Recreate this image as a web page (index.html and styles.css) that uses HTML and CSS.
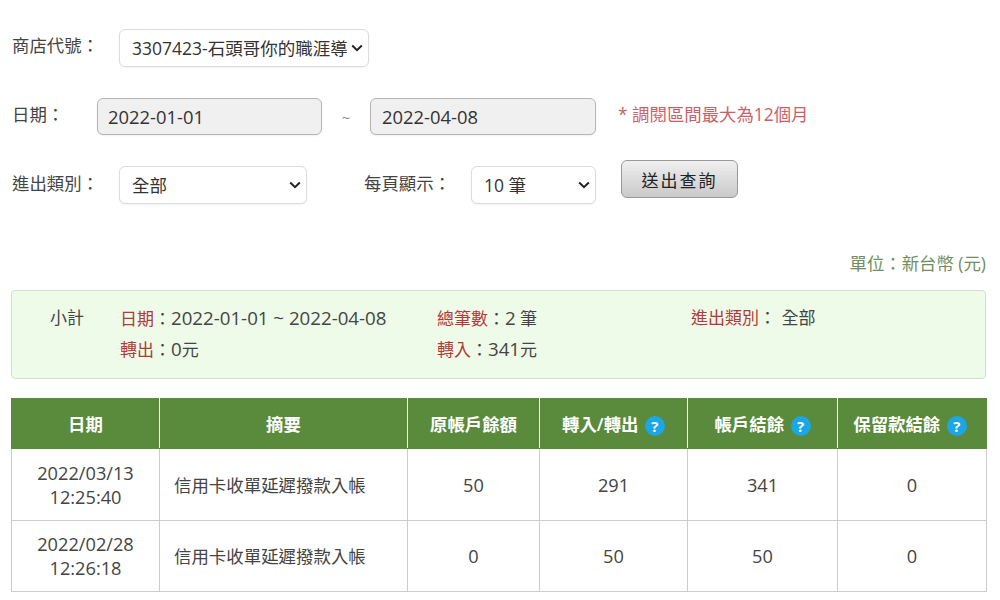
FILE: index.html
```html
<!DOCTYPE html>
<html lang="zh-Hant">
<head>
<meta charset="utf-8">
<title>查詢</title>
<link rel="stylesheet" href="styles.css">
</head>
<body>
<main class="page">
  <form class="query">
    <div class="row row-shop">
      <label class="label label-wide">商店代號：</label>
      <select class="field select-shop"><option>3307423-石頭哥你的職涯導師</option></select>
    </div>
    <div class="row row-date">
      <label class="label label-date">日期：</label>
      <input class="field date" type="text" value="2022-01-01" readonly>
      <span class="tilde">~</span>
      <input class="field date" type="text" value="2022-04-08" readonly>
      <span class="hint">* 調閱區間最大為12個月</span>
    </div>
    <div class="row row-type">
      <label class="label label-wide">進出類別：</label>
      <select class="field select-type"><option>全部</option></select>
      <label class="label label-page">每頁顯示：</label>
      <select class="field select-page"><option>10 筆</option></select>
      <button class="submit" type="button">送出查詢</button>
    </div>
  </form>

  <p class="unit">單位：新台幣 (元)</p>

  <section class="summary">
    <div class="summary-title">小計</div>
    <div class="summary-grid">
      <div><span class="key">日期</span>：<span class="val">2022-01-01 ~ 2022-04-08</span></div>
      <div><span class="key">總筆數</span>：<span class="val">2</span> 筆</div>
      <div><span class="key">進出類別</span>：&nbsp;<span class="all">全部</span></div>
      <div><span class="key">轉出</span>：<span class="val">0</span>元</div>
      <div><span class="key">轉入</span>：<span class="val">341</span>元</div>
    </div>
  </section>

  <table class="records">
    <colgroup>
      <col class="c1"><col class="c2"><col class="c3"><col class="c4"><col class="c5"><col class="c6">
    </colgroup>
    <thead>
      <tr>
        <th>日期</th>
        <th>摘要</th>
        <th>原帳戶餘額</th>
        <th>轉入/轉出 <span class="help">?</span></th>
        <th>帳戶結餘 <span class="help">?</span></th>
        <th class="last">保留款結餘 <span class="help">?</span></th>
      </tr>
    </thead>
    <tbody>
      <tr class="first">
        <td>2022/03/13<br>12:25:40</td>
        <td class="desc">信用卡收單延遲撥款入帳</td>
        <td>50</td><td>291</td><td>341</td><td>0</td>
      </tr>
      <tr>
        <td>2022/02/28<br>12:26:18</td>
        <td class="desc">信用卡收單延遲撥款入帳</td>
        <td>0</td><td>50</td><td>50</td><td>0</td>
      </tr>
    </tbody>
  </table>
</main>
</body>
</html>
```
FILE: styles.css
```css
* { box-sizing: border-box; }
html, body { margin: 0; padding: 0; background: #fff; }
body {
  font-family: "Open Sans", "Noto Sans CJK TC", sans-serif;
  font-size: 17.5px;
  color: #444;
  overflow: hidden;
  height: 600px;
}
.page { padding: 29px 14px 0 11px; width: 1000px; }
.row { display: flex; align-items: flex-start; }
.row-shop { height: 69px; }
.row-date { height: 68px; }
.row-type { height: 69px; }
.label { display: block; padding-left: 1px; line-height: 33px; font-size: 17.4px; color: #444; flex: none; }
.row-type .label { line-height: 35px; }
.label-wide { width: 108px; }
.label-date { width: 86px; }
.label-page { width: 107px; margin-left: 57px; padding-left: 0; }
.field {
  font-family: inherit;
  font-size: 17.5px;
  color: #333;
  height: 37px;
  border: 1px solid #dcdcdc;
  border-radius: 6px;
  background-color: #fff;
  box-shadow: 0 1px 2px rgba(0,0,0,.06);
  flex: none;
}
select.field {
  appearance: none;
  padding: 0 21px 0 12px;
  height: 38px;
  background-image: url("data:image/svg+xml,%3Csvg xmlns='http://www.w3.org/2000/svg' width='12' height='8' viewBox='0 0 12 8'%3E%3Cpath d='M1.2 1.5 6 6.2l4.8-4.7' fill='none' stroke='%23222' stroke-width='2'/%3E%3C/svg%3E");
  background-repeat: no-repeat;
  background-position: right 5px center;
}
.select-shop { width: 250px; }
.select-type { width: 188px; background-position: right 5px center; }
.select-page { width: 125px; }
.date {
  width: 225px;
  padding: 0 10px;
  background: #f0f0f0;
  border-color: #b5b5b5;
  font-size: 18.4px;
  outline: none;
}
.tilde + .date { width: 226px; padding-left: 11px; }
.tilde { width: 48px; text-align: center; line-height: 38px; color: #888; font-size: 15px; flex: none; }
.hint { margin-left: 22px; color: #c9616a; line-height: 32px; font-size: 17.4px; }
.submit {
  width: 117px;
  height: 38px;
  margin: -6px 0 0 25px;
  border: 1px solid #999;
  border-radius: 6px;
  background: linear-gradient(#f0f0f0, #c9c9c9);
  font-family: inherit;
  font-size: 17px;
  letter-spacing: 2px;
  color: #222;
}
.unit {
  margin: 0;
  height: 55px;
  padding-top: 15px;
  line-height: 27px;
  text-align: right;
  color: #6f8f5d;
  font-size: 17.4px;
}
.summary {
  display: flex;
  height: 89px;
  padding: 11px 0 0 38px;
  background: #eefbe9;
  border: 1px solid #d5dcd2;
  border-radius: 4px;
  line-height: 31px;
  font-size: 17px;
}
.summary-title { width: 70px; flex: none; }
.summary-grid {
  display: grid;
  grid-template-columns: 317px 254px 1fr;
  grid-auto-rows: 31px;
  align-content: start;
}
.val { font-size: 18.7px; }
.all { margin-left: 1px; }
.key { color: #b23a3a; }
.records {
  margin-top: 19px;
  width: 975px;
  border-collapse: collapse;
  table-layout: fixed;
}
.c1 { width: 148px; }
.c2 { width: 248px; }
.c3 { width: 132px; }
.c4 { width: 148px; }
.c5 { width: 150px; }
.c6 { width: 149px; }
.records th {
  height: 50px;
  padding: 0;
  background: #5a8a3c;
  color: #fff;
  font-size: 17.4px;
  font-weight: 600;
  text-align: center;
  border: 1px solid #5a8a3c;
  border-left-color: #fff;
  border-right-color: #fff;
}
.records th:first-child { border-left-color: #5a8a3c; }
.records th:last-child { border-right-color: #5a8a3c; }
.records th.last { padding-right: 4px; }
.records td {
  height: 71px;
  padding: 0;
  text-align: center;
  border: 1px solid #ccc;
  line-height: 24px;
  color: #444;
  font-size: 18.2px;
}
.records .first td { height: 72px; }
.records td.desc { text-align: left; padding-left: 14px; font-size: 17.45px; }
.help {
  display: inline-block;
  width: 20px;
  height: 20px;
  margin-left: 2px;
  border-radius: 50%;
  background: #1ba6e6;
  color: #fff;
  font-size: 15px;
  line-height: 20px;
  font-weight: 700;
  vertical-align: -1px;
  text-align: center;
}
```
